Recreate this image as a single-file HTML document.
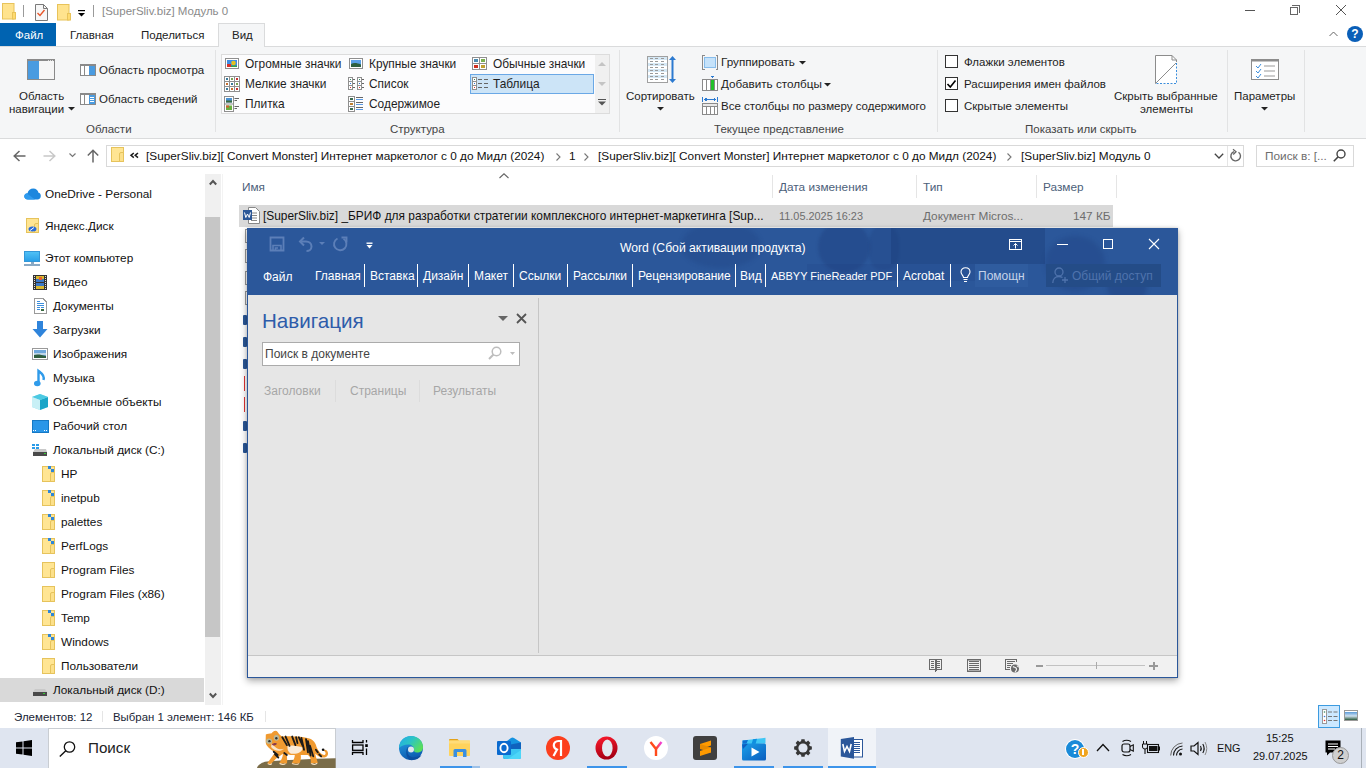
<!DOCTYPE html>
<html><head><meta charset="utf-8">
<style>
*{margin:0;padding:0;box-sizing:border-box}
html,body{width:1366px;height:768px;overflow:hidden;background:#fff;font-family:"Liberation Sans",sans-serif;font-size:12px;color:#000;position:relative}
.a{position:absolute;white-space:nowrap}
.t{font-size:11.5px;line-height:14px;color:#1e1e1e}
.w{font-size:12px;line-height:14px;color:#fff}
.u{font-size:11.8px;line-height:14px;color:#111}
.fold{position:absolute;width:13px;height:16px;background:#FFE593;border:1px solid #E6C35C}
.fold:after{content:"";position:absolute;right:-1px;bottom:-1px;width:3px;height:8px;border:1px solid #E6C35C;border-top-left-radius:2px;background:#FCE08A}
svg{position:absolute;overflow:visible}
</style></head><body>

<!-- ============ TITLE BAR ============ -->
<div id="title">
 <svg style="left:2px;top:3px" width="14" height="17"><rect x="0.5" y="0.5" width="11.5" height="15.5" fill="#FFE38E" stroke="#E8C35A"/><rect x="10.5" y="9.5" width="3" height="6.5" fill="#FFDB70" stroke="#E8C35A"/></svg>
 <div class="a" style="left:23px;top:5px;width:1px;height:12px;background:#9a9a9a"></div>
 <svg style="left:35px;top:4px" width="13" height="17"><path d="M0.5 0.5H8.5L12.5 4.5V16.5H0.5Z" fill="#f7f7f7" stroke="#7a7a7a"/><path d="M8.5 0.5V4.5H12.5" fill="none" stroke="#7a7a7a"/></svg>
 <svg style="left:37px;top:9px" width="8" height="8"><path d="M0.5 4 L3 6.5 L7.5 1" stroke="#E8562A" stroke-width="1.4" fill="none"/></svg>
 <svg style="left:57px;top:4px" width="14" height="17"><rect x="0.5" y="0.5" width="11.5" height="15.5" fill="#FFE38E" stroke="#E8C35A"/><rect x="10.5" y="9.5" width="3" height="6.5" fill="#FFDB70" stroke="#E8C35A"/></svg>
 <svg style="left:78px;top:10px" width="8" height="7"><rect x="0" y="0" width="7" height="1.2" fill="#000"/><path d="M0 3 L7 3 L3.5 6.5Z" fill="#000"/></svg>
 <div class="a" style="left:93px;top:5px;width:1px;height:12px;background:#9a9a9a"></div>
 <div class="a t" style="left:102px;top:4px;color:#8a8a8a">[SuperSliv.biz] Модуль 0</div>
 <div class="a" style="left:1245px;top:10px;width:10px;height:1px;background:#555"></div>
 <div class="a" style="left:1290px;top:7px;width:8px;height:8px;border:1px solid #666"></div>
 <div class="a" style="left:1292px;top:5px;width:8px;height:8px;border-top:1px solid #666;border-right:1px solid #666"></div>
 <svg style="left:1336px;top:5px" width="10" height="10"><path d="M0 0L10 10M10 0L0 10" stroke="#555" stroke-width="1"/></svg>
</div>

<!-- ============ TABS ============ -->
<div class="a" style="left:0;top:23px;width:56px;height:23px;background:#0063B1"></div>
<div class="a t" style="left:15px;top:28px;color:#fff">Файл</div>
<div class="a t" style="left:70px;top:28px;color:#222">Главная</div>
<div class="a t" style="left:141px;top:28px;color:#222">Поделиться</div>
<div class="a" style="left:218px;top:23px;width:47px;height:24px;background:#F5F6F7;border:1px solid #DADBDC;border-bottom:none;z-index:2"></div>
<div class="a t" style="left:232px;top:28px;color:#222;z-index:3">Вид</div>
<svg style="left:1329px;top:31px" width="9" height="6"><path d="M0.5 5 L4.5 1 L8.5 5" stroke="#666" stroke-width="1" fill="none"/></svg>
<div class="a" style="left:1347px;top:26px;width:16px;height:16px;border-radius:50%;background:#0A5FB8;color:#fff;font-weight:bold;font-size:12px;line-height:16px;text-align:center">?</div>

<!-- ============ RIBBON ============ -->
<div class="a" style="left:0;top:46px;width:1366px;height:93px;background:#F5F6F7;border-top:1px solid #DADBDC;border-bottom:1px solid #DADBDC"></div>
<div id="ribbon">
 <!-- Области -->
 <svg style="left:27px;top:59px" width="28" height="21" shape-rendering="crispEdges"><rect x="0.5" y="0.5" width="27" height="20" fill="#f6f6f6" stroke="#8a8a8a"/><rect x="1" y="1" width="26" height="1" fill="#8a8a8a"/><rect x="1" y="2" width="11" height="18" fill="#4A9BE0"/><rect x="21" y="1" width="1" height="1" fill="#ddd"/><rect x="23" y="1" width="1" height="1" fill="#ddd"/><rect x="25" y="1" width="1" height="1" fill="#ddd"/></svg>
 <div class="a t" style="left:19px;top:89px;">Область</div>
 <div class="a t" style="left:9px;top:102px;">навигации</div>
 <svg style="left:68px;top:107px" width="7" height="4"><path d="M0 0H7L3.5 3.5Z" fill="#222"/></svg>
 <svg style="left:80px;top:64px" width="16" height="12" shape-rendering="crispEdges"><rect x="0.5" y="0.5" width="15" height="11" fill="#fff" stroke="#8a8a8a"/><rect x="1" y="1" width="14" height="1" fill="#8a8a8a"/><rect x="4" y="2" width="1" height="9" fill="#8a8a8a"/><rect x="9" y="2" width="6" height="9" fill="#4A9BE0"/></svg>
 <div class="a t" style="left:99px;top:63px;">Область просмотра</div>
 <svg style="left:80px;top:93px" width="16" height="12" shape-rendering="crispEdges"><rect x="0.5" y="0.5" width="15" height="11" fill="#fff" stroke="#8a8a8a"/><rect x="1" y="1" width="14" height="1" fill="#8a8a8a"/><rect x="4" y="2" width="1" height="9" fill="#8a8a8a"/><rect x="9" y="2" width="6" height="9" fill="#4A9BE0"/><path d="M10 4.5H14M10 6.5H14M10 8.5H14" stroke="#fff"/></svg>
 <div class="a t" style="left:99px;top:92px;">Область сведений</div>
 <div class="a t" style="left:86px;top:122px;color:#444">Области</div>
 <div class="a" style="left:215px;top:50px;width:1px;height:82px;background:#E2E3E4"></div>
 <!-- Структура gallery -->
 <div class="a" style="left:221px;top:54px;width:389px;height:60px;background:#FCFCFD;border:1px solid #DCDCDC"></div>
 <div class="a" style="left:595px;top:55px;width:14px;height:58px;background:#F0F0F0"></div>
 <svg style="left:598px;top:62px" width="8" height="4"><path d="M0 4H8L4 0Z" fill="#C4C4C4"/></svg>
 <svg style="left:598px;top:82px" width="8" height="4"><path d="M0 0H8L4 4Z" fill="#C4C4C4"/></svg>
 <svg style="left:598px;top:99px" width="8" height="7"><rect x="0" y="0" width="8" height="1" fill="#555"/><path d="M0 2.5H8L4 6.5Z" fill="#555"/></svg>
 <div class="a" style="left:470px;top:74px;width:124px;height:20px;background:#CCE4F7;border:1px solid #6AA8E6"></div>
 <!-- gallery icons -->
 <svg style="left:225px;top:58px" width="14" height="11"><rect x="0.5" y="0.5" width="13" height="10" fill="#fff" stroke="#8f8f8f"/><rect x="2" y="2" width="10" height="7" fill="#3D8EE6"/><circle cx="8.5" cy="5" r="2.3" fill="#E6C21E"/><rect x="2" y="6" width="4" height="3" fill="#D8302A"/><rect x="6" y="7.5" width="6" height="1.5" fill="#3BA040"/></svg>
 <svg style="left:224px;top:76px" width="16" height="16"><rect x="0.5" y="0.5" width="15" height="15" fill="#fff" stroke="#8f8f8f"/><path d="M5.5 0.5V15.5M10.5 0.5V15.5M0.5 5.5H15.5M0.5 10.5H15.5" stroke="#8f8f8f"/><rect x="2" y="2" width="2" height="2" fill="#3a7a9a"/><rect x="7" y="2" width="2" height="2" fill="#7aa050"/><rect x="12" y="2" width="2" height="2" fill="#c83030"/><rect x="2" y="7" width="2" height="2" fill="#c87030"/><rect x="7" y="7" width="2" height="2" fill="#3a7a9a"/><rect x="12" y="7" width="2" height="2" fill="#7aa050"/><rect x="2" y="12" width="2" height="2" fill="#3a7a9a"/><rect x="7" y="12" width="2" height="2" fill="#c87030"/><rect x="12" y="12" width="2" height="2" fill="#c83030"/></svg>
 <svg style="left:224px;top:96px" width="16" height="16"><rect x="0.5" y="0.5" width="9" height="15" fill="#fff" stroke="#8f8f8f"/><path d="M0.5 8H9.5" stroke="#8f8f8f"/><rect x="2" y="2" width="6" height="4.5" fill="#4a90d0"/><rect x="2" y="4.5" width="6" height="2" fill="#3a6a40"/><rect x="2" y="9.5" width="6" height="4.5" fill="#6ab040"/><rect x="2" y="9.5" width="3" height="2" fill="#d06030"/><path d="M10.5 2.5H15M10.5 4.5H13M10.5 10.5H15M10.5 12.5H13" stroke="#666"/></svg>
 <svg style="left:349px;top:58px" width="14" height="11"><rect x="0.5" y="0.5" width="13" height="10" fill="#fff" stroke="#8f8f8f"/><rect x="2" y="2" width="10" height="7" fill="#5AA0E8"/><path d="M2 9V6C5 4.5 8 5 12 6.5V9Z" fill="#2E6040"/></svg>
 <svg style="left:348px;top:77px" width="17" height="13"><rect x="0.5" y="0.5" width="4" height="12" fill="#fff" stroke="#8f8f8f"/><path d="M0.5 4.5H4.5M0.5 8.5H4.5" stroke="#8f8f8f"/><rect x="9.5" y="0.5" width="4" height="12" fill="#fff" stroke="#8f8f8f"/><path d="M9.5 4.5H13.5M9.5 8.5H13.5" stroke="#8f8f8f"/><path d="M5 2.5H7M5 6.5H7M5 10.5H7M14 2.5H16M14 6.5H16M14 10.5H16" stroke="#666"/><rect x="2" y="2" width="1" height="1" fill="#386"/><rect x="2" y="6" width="1" height="1" fill="#37d"/><rect x="2" y="10" width="1" height="1" fill="#d33"/><rect x="11" y="2" width="1" height="1" fill="#386"/><rect x="11" y="6" width="1" height="1" fill="#37d"/><rect x="11" y="10" width="1" height="1" fill="#d33"/></svg>
 <svg style="left:348px;top:96px" width="16" height="16"><rect x="0.5" y="0.5" width="6" height="15" fill="#fff" stroke="#8f8f8f"/><path d="M0.5 5.5H6.5M0.5 10.5H6.5" stroke="#8f8f8f"/><rect x="2" y="2" width="3" height="2" fill="#3a6a50"/><rect x="2" y="7" width="3" height="2" fill="#c08030"/><rect x="2" y="12" width="3" height="2" fill="#3a6a50"/><path d="M8 1.5H15M8 6.5H15M8 11.5H15" stroke="#666"/><path d="M8 3.5H15M8 8.5H15M8 13.5H15" stroke="#5A9BE8"/></svg>
 <svg style="left:472px;top:57px" width="15" height="13"><rect x="0.5" y="0.5" width="14" height="12" fill="#fff" stroke="#8f8f8f"/><path d="M7.5 0.5V12.5M0.5 6.5H14.5" stroke="#8f8f8f"/><rect x="2" y="2" width="4" height="3" fill="#4a8ab0"/><rect x="9" y="2" width="4" height="3" fill="#7ab050"/><rect x="2" y="8" width="4" height="3" fill="#d03020"/><rect x="9" y="8" width="4" height="3" fill="#c0a030"/></svg>
 <svg style="left:472px;top:77px" width="17" height="13"><rect x="0.5" y="0.5" width="4" height="12" fill="#fff" stroke="#8f8f8f"/><path d="M0.5 4.5H4.5M0.5 8.5H4.5" stroke="#8f8f8f"/><rect x="2" y="2" width="1" height="1" fill="#386"/><rect x="2" y="6" width="1" height="1" fill="#37d"/><rect x="2" y="10" width="1" height="1" fill="#d33"/><path d="M6 2.5H10M12 2.5H16M6 6.5H10M12 6.5H16M6 10.5H10M12 10.5H16" stroke="#666"/></svg>
 <div class="a t" style="left:245px;top:57px;font-size:11.9px">Огромные значки</div>
 <div class="a t" style="left:245px;top:77px;font-size:11.9px">Мелкие значки</div>
 <div class="a t" style="left:245px;top:97px;font-size:11.9px">Плитка</div>
 <div class="a t" style="left:369px;top:57px;font-size:11.9px">Крупные значки</div>
 <div class="a t" style="left:369px;top:77px;font-size:11.9px">Список</div>
 <div class="a t" style="left:369px;top:97px;font-size:11.9px">Содержимое</div>
 <div class="a t" style="left:493px;top:57px;font-size:11.9px">Обычные значки</div>
 <div class="a t" style="left:493px;top:77px;font-size:11.9px">Таблица</div>
 <div class="a t" style="left:390px;top:122px;color:#444">Структура</div>
 <div class="a" style="left:619px;top:50px;width:1px;height:82px;background:#E2E3E4"></div>
 <!-- Текущее представление -->
 <svg style="left:647px;top:56px" width="21" height="27" shape-rendering="crispEdges"><rect x="0.5" y="0.5" width="20" height="26" fill="#fff" stroke="#a0a0a0"/><rect x="1" y="1" width="19" height="3" fill="#D5E8F5"/><path d="M3 2.5H6M8 2.5H11M14 2.5H17" stroke="#9a9a9a"/><path d="M3 5.5H6M8 5.5H11M14 5.5H17" stroke="#9a9a9a"/><rect x="1" y="7" width="19" height="3" fill="#D5E8F5"/><path d="M3 8.5H6M8 8.5H11M14 8.5H17" stroke="#9a9a9a"/><path d="M3 11.5H6M8 11.5H11M14 11.5H17" stroke="#9a9a9a"/><rect x="1" y="13" width="19" height="3" fill="#D5E8F5"/><path d="M3 14.5H6M8 14.5H11M14 14.5H17" stroke="#9a9a9a"/><path d="M3 17.5H6M8 17.5H11M14 17.5H17" stroke="#9a9a9a"/><rect x="1" y="19" width="19" height="3" fill="#D5E8F5"/><path d="M3 20.5H6M8 20.5H11M14 20.5H17" stroke="#9a9a9a"/><path d="M3 23.5H6M8 23.5H11M14 23.5H17" stroke="#9a9a9a"/></svg>
 <svg style="left:669px;top:56px" width="7" height="27"><path d="M3.5 3V24" stroke="#2C7AD0" stroke-width="2"/><path d="M0 4L3.5 0L7 4ZM0 23L3.5 27L7 23Z" fill="#2C7AD0"/></svg>
 <div class="a t" style="left:626px;top:89px;">Сортировать</div>
 <svg style="left:657px;top:107px" width="7" height="4"><path d="M0 0H7L3.5 3.5Z" fill="#222"/></svg>
 <svg style="left:702px;top:55px" width="16" height="15" shape-rendering="crispEdges"><path d="M2.5 0.5H0.5V14.5H2.5M13.5 0.5H15.5V14.5H13.5" fill="none" stroke="#8a8a8a"/><rect x="2.5" y="2.5" width="11" height="10" fill="#C5E2FA" stroke="#88BDEB"/></svg>
 <div class="a t" style="left:721px;top:55px;font-size:11.7px">Группировать</div>
 <svg style="left:799px;top:61px" width="7" height="4"><path d="M0 0H7L3.5 3.5Z" fill="#222"/></svg>
 <svg style="left:702px;top:76px" width="17" height="16" shape-rendering="crispEdges"><path d="M8 0H13L10.5 2Z" fill="#2C7AD0"/><rect x="0.5" y="3.5" width="15" height="11" fill="#fff" stroke="#8a8a8a"/><path d="M4.5 3.5V14.5M8.5 3.5V14.5M12.5 3.5V14.5" stroke="#8a8a8a"/><rect x="9" y="4" width="3" height="10" fill="#22C02A"/></svg>
 <div class="a t" style="left:721px;top:77px;font-size:11.7px">Добавить столбцы</div>
 <svg style="left:824px;top:83px" width="7" height="4"><path d="M0 0H7L3.5 3.5Z" fill="#222"/></svg>
 <svg style="left:702px;top:97px" width="17" height="18" shape-rendering="crispEdges"><path d="M0.5 0V5M15.5 0V5M2 2.5H14" stroke="#2C7AD0"/><path d="M2 2.5L4.5 0.5V4.5ZM14 2.5L11.5 0.5V4.5Z" fill="#2C7AD0"/><rect x="0.5" y="6.5" width="15" height="11" fill="#fff" stroke="#8a8a8a"/><path d="M0.5 9.5H15.5M4.5 9.5V17.5M8.5 9.5V17.5M12.5 9.5V17.5" stroke="#8a8a8a"/><rect x="1" y="7" width="14" height="2" fill="#e8e8e8"/></svg>
 <div class="a t" style="left:721px;top:99px;">Все столбцы по размеру содержимого</div>
 <div class="a t" style="left:714px;top:122px;color:#444">Текущее представление</div>
 <div class="a" style="left:937px;top:50px;width:1px;height:82px;background:#E2E3E4"></div>
 <!-- Показать или скрыть -->
 <div class="a" style="left:945px;top:55px;width:13px;height:13px;border:1px solid #333;background:#fff"></div>
 <div class="a t" style="left:964px;top:55px;">Флажки элементов</div>
 <div class="a" style="left:945px;top:77px;width:13px;height:13px;border:1px solid #333;background:#fff"></div>
 <svg style="left:947px;top:80px" width="9" height="8"><path d="M0.5 4L3.3 7L8.5 0.5" stroke="#000" stroke-width="1.6" fill="none"/></svg>
 <div class="a t" style="left:964px;top:77px;">Расширения имен файлов</div>
 <div class="a" style="left:945px;top:99px;width:13px;height:13px;border:1px solid #333;background:#fff"></div>
 <div class="a t" style="left:964px;top:99px;">Скрытые элементы</div>
 <svg style="left:1155px;top:55px" width="22" height="29"><path d="M0.5 28.5V0.5H17L21.5 5V28.5" fill="#fff" stroke="none"/><path d="M0.5 28.5V0.5H17L21.5 5V7" fill="none" stroke="#8c8c8c"/><path d="M17 0.5V5H21.5" fill="none" stroke="#8c8c8c"/><path d="M0.5 28.5L21 8" stroke="#8c8c8c"/><path d="M21.5 8V28.5H1" stroke="#3C8EDC" stroke-dasharray="2 1.5" fill="none"/></svg>
 <div class="a t" style="left:1114px;top:89px;">Скрыть выбранные</div>
 <div class="a t" style="left:1140px;top:102px;">элементы</div>
 <div class="a t" style="left:1025px;top:122px;color:#444">Показать или скрыть</div>
 <div class="a" style="left:1227px;top:50px;width:1px;height:82px;background:#E2E3E4"></div>
 <!-- Параметры -->
 <svg style="left:1251px;top:59px" width="28" height="21"><rect x="0.5" y="0.5" width="27" height="20" fill="#fff" stroke="#8c8c8c"/><rect x="0.5" y="0.5" width="27" height="2" fill="#8c8c8c"/><path d="M5 7L7 9L10 5M5 12L7 14L10 10M5 17L7 19L10 15" stroke="#3C8EDC" stroke-width="1" fill="none"/><path d="M13 7H24M13 12H24M13 17H24" stroke="#999"/></svg>
 <div class="a t" style="left:1234px;top:89px;">Параметры</div>
 <svg style="left:1261px;top:107px" width="7" height="4"><path d="M0 0H7L3.5 3.5Z" fill="#222"/></svg>
 <div class="a" style="left:1304px;top:50px;width:1px;height:82px;background:#E2E3E4"></div>
</div>

<!-- ============ ADDRESS BAR ============ -->
<div id="addr">
 <svg style="left:13px;top:150px" width="13" height="12"><path d="M12.5 6H1.5M6.5 1L1.2 6L6.5 11" stroke="#666" stroke-width="1.5" fill="none"/></svg>
 <svg style="left:43px;top:150px" width="13" height="12"><path d="M0.5 6H11.5M6.5 1L11.8 6L6.5 11" stroke="#C8C8C8" stroke-width="1.5" fill="none"/></svg>
 <svg style="left:69px;top:153px" width="7" height="5"><path d="M0.5 0.5L3.5 3.5L6.5 0.5" stroke="#777" stroke-width="1.2" fill="none"/></svg>
 <svg style="left:87px;top:149px" width="12" height="14"><path d="M6 13.5V1.5M0.8 6.5L6 1.2L11.2 6.5" stroke="#666" stroke-width="1.5" fill="none"/></svg>
 <div class="a" style="left:106px;top:145px;width:1138px;height:22px;border:1px solid #D9D9D9;background:#fff"></div>
 <div class="fold" style="left:111px;top:147px;width:13px;height:15px"></div>
 <svg style="left:130px;top:152px" width="9" height="7"><path d="M3.8 1L1 3.3L3.8 5.6M8 1L5.2 3.3L8 5.6" stroke="#1a1a1a" stroke-width="1.5" fill="none"/></svg>
 <div class="a u" style="left:146px;top:149px;">[SuperSliv.biz][ Convert Monster] Интернет маркетолог с 0 до Мидл (2024)</div>
 <svg style="left:556px;top:153px" width="5" height="8"><path d="M0.5 0.5L4 4L0.5 7.5" stroke="#777" stroke-width="1.1" fill="none"/></svg>
 <div class="a u" style="left:569px;top:149px;">1</div>
 <svg style="left:584px;top:153px" width="5" height="8"><path d="M0.5 0.5L4 4L0.5 7.5" stroke="#777" stroke-width="1.1" fill="none"/></svg>
 <div class="a u" style="left:598px;top:149px;">[SuperSliv.biz][ Convert Monster] Интернет маркетолог с 0 до Мидл (2024)</div>
 <svg style="left:1007px;top:153px" width="5" height="8"><path d="M0.5 0.5L4 4L0.5 7.5" stroke="#777" stroke-width="1.1" fill="none"/></svg>
 <div class="a u" style="left:1021px;top:149px;">[SuperSliv.biz] Модуль 0</div>
 <svg style="left:1214px;top:153px" width="10" height="6"><path d="M0.8 0.8L5 5L9.2 0.8" stroke="#444" stroke-width="1.3" fill="none"/></svg>
 <div class="a" style="left:1227px;top:146px;width:1px;height:20px;background:#E5E5E5"></div>
 <svg style="left:1230px;top:149px" width="12" height="14"><path d="M8.5 3.2A4.8 4.8 0 1 1 4 2.6" stroke="#666" stroke-width="1.4" fill="none"/><path d="M3 0.3L6 2.7L3.2 5.5" stroke="#666" stroke-width="1.3" fill="none"/></svg>
 <div class="a" style="left:1256px;top:145px;width:98px;height:22px;border:1px solid #D9D9D9;background:#fff"></div>
 <div class="a u" style="left:1265px;top:149px;color:#6d6d6d">Поиск в: [...</div>
 <svg style="left:1333px;top:149px" width="13" height="13"><circle cx="8" cy="5" r="4" stroke="#444" stroke-width="1.4" fill="none"/><path d="M5.2 7.8L0.8 12.2" stroke="#444" stroke-width="1.6"/></svg>
</div>

<!-- ============ NAV PANE ============ -->
<div id="nav">
<div class="a" style="left:0;top:678px;width:204px;height:24px;background:#D9D9D9"></div>
<div class="a" style="left:205px;top:174px;width:16px;height:531px;background:#F0F0F0"></div>
<div class="a" style="left:205px;top:217px;width:15px;height:420px;background:#C6C6C6"></div><div class="a" style="left:222px;top:174px;width:1px;height:531px;background:#F3F3F3"></div>
<svg style="left:209px;top:179px" width="8" height="7"><path d="M0.8 5.5L4 2L7.2 5.5" stroke="#555" stroke-width="2" fill="none"/></svg>
<svg style="left:209px;top:692px" width="8" height="7"><path d="M0.8 1.5L4 5L7.2 1.5" stroke="#555" stroke-width="2" fill="none"/></svg>
<div class="a u" style="left:45px;top:187px;">OneDrive - Personal</div>
<svg style="left:24px;top:188px" width="17" height="12"><path d="M4 11.5C1.5 11.5 0.3 10 0.3 8.3C0.3 6.5 1.8 5.2 3.5 5.3C4.2 2.5 6.5 0.5 9.3 0.5C12 0.5 14 2.4 14.5 4.8C16 5 16.8 6.4 16.8 8C16.8 10 15.3 11.5 13.5 11.5Z" fill="#1C87DE"/><path d="M4 11.5C1.5 11.5 0.3 10 0.3 8.3C0.3 6.8 1.5 5.5 3 5.4L11 11.5Z" fill="#2E9BEF"/></svg>
<div class="a u" style="left:45px;top:219px;">Яндекс.Диск</div>
<div class="fold" style="left:26px;top:218px;width:13px;height:15px"></div><svg style="left:28px;top:226px" width="9" height="6"><ellipse cx="4.5" cy="3" rx="4" ry="2.5" fill="#2A6BD8"/><path d="M2 4.5L6 1.5" stroke="#fff" stroke-width="1"/></svg>
<div class="a u" style="left:45px;top:251px;">Этот компьютер</div>
<div class="a" style="left:24px;top:251px;width:16px;height:11px;background:linear-gradient(180deg,#4FC0F5,#2AA0E8);border:1px solid #3397D8"></div><div class="a" style="left:24px;top:264px;width:16px;height:2px;background:#8AA9C4"></div><div class="a" style="left:31px;top:262px;width:3px;height:2px;background:#8AA9C4"></div>
<div class="a u" style="left:53px;top:275px;">Видео</div>
<svg style="left:33px;top:275px" width="14" height="15" shape-rendering="crispEdges"><rect x="0" y="0" width="14" height="15" fill="#333"/><path d="M1.5 1V14M12.5 1V14" stroke="#ddd" stroke-dasharray="1 1"/><rect x="3" y="1" width="8" height="6" fill="#3A78C8"/><rect x="3" y="1" width="8" height="3" fill="#D8B830"/><rect x="6" y="2" width="3" height="3" fill="#E86030"/><rect x="3" y="8" width="8" height="6" fill="#3A78C8"/><rect x="3" y="11" width="8" height="3" fill="#D8B830"/></svg>
<div class="a u" style="left:53px;top:299px;">Документы</div>
<svg style="left:34px;top:298px" width="13" height="16" shape-rendering="crispEdges"><path d="M0.5 0.5H9L12.5 4V15.5H0.5Z" fill="#fff" stroke="#9a9a9a"/><path d="M3 3.5H6M3 5.5H10M3 7.5H10M3 9.5H6M7 9.5H10M3 11.5H6M7 11.5H10" stroke="#3C8EDC"/><rect x="7" y="11" width="3" height="2" fill="#3a6a40"/></svg>
<div class="a u" style="left:53px;top:323px;">Загрузки</div>
<svg style="left:32px;top:321px" width="16" height="17"><path d="M5 0H11V8H15.5L8 16.5L0.5 8H5Z" fill="#2F84DB"/></svg>
<div class="a u" style="left:53px;top:347px;">Изображения</div>
<svg style="left:32px;top:348px" width="16" height="12" shape-rendering="crispEdges"><rect x="0.5" y="0.5" width="15" height="11" fill="#fff" stroke="#9a9a9a"/><rect x="2" y="2" width="12" height="8" fill="#6FA8DC"/><rect x="2" y="5" width="12" height="2" fill="#BFD6E8"/><path d="M2 10V7C5 6 9 6.5 14 8V10Z" fill="#2F5E3E" shape-rendering="auto"/></svg>
<div class="a u" style="left:53px;top:371px;">Музыка</div>
<svg style="left:34px;top:370px" width="12" height="17"><path d="M4.5 13V1C7 3 11 5 9.5 10" stroke="#2F9BEA" stroke-width="2.4" fill="none"/><ellipse cx="3.3" cy="13.5" rx="3.3" ry="2.8" fill="#2F9BEA"/></svg>
<div class="a u" style="left:53px;top:395px;">Объемные объекты</div>
<svg style="left:32px;top:394px" width="16" height="16"><path d="M8 0L16 3V13L8 16L0 13V3Z" fill="#8FE0EE"/><path d="M8 6L16 3V13L8 16Z" fill="#1AA5C8"/><path d="M0 3L8 0L16 3L8 6Z" fill="#4CC9E2"/><path d="M0 3L8 6V16L0 13Z" fill="#C8F0F6"/></svg>
<div class="a u" style="left:53px;top:419px;">Рабочий стол</div>
<svg style="left:32px;top:420px" width="16" height="13" shape-rendering="crispEdges"><rect x="0" y="0" width="16" height="12" fill="#2A96E8"/><rect x="0" y="0" width="16" height="12" fill="none" stroke="#1578C4"/><path d="M1 10.5H2M3 10.5H4M12 10.5H13M14 10.5H15" stroke="#fff"/></svg>
<div class="a u" style="left:53px;top:443px;">Локальный диск (C:)</div>
<svg style="left:32px;top:444px" width="16" height="13" shape-rendering="crispEdges"><rect x="0" y="0" width="3" height="2" fill="#2A9BE8"/><rect x="3.5" y="0" width="3" height="2" fill="#2A9BE8"/><rect x="0" y="2.5" width="3" height="2" fill="#2A9BE8"/><rect x="3.5" y="2.5" width="3" height="2" fill="#2A9BE8"/><path d="M1 8L3 5H14L15 8Z" fill="#C9C9C9" shape-rendering="auto"/><rect x="1" y="8" width="14" height="4" fill="#4A4A4A"/><rect x="12" y="9" width="2" height="1" fill="#3c3"/></svg>
<div class="a u" style="left:61px;top:467px;">HP</div>
<div class="fold" style="left:42px;top:466px"></div>
<svg style="left:48px;top:466px" width="7" height="7"><rect x="0" y="0" width="3" height="3" fill="#2E86D9"/><rect x="3" y="3" width="3" height="3" fill="#2E86D9"/></svg>
<div class="a u" style="left:61px;top:491px;">inetpub</div>
<div class="fold" style="left:42px;top:490px"></div>
<svg style="left:48px;top:490px" width="7" height="7"><rect x="0" y="0" width="3" height="3" fill="#2E86D9"/><rect x="3" y="3" width="3" height="3" fill="#2E86D9"/></svg>
<div class="a u" style="left:61px;top:515px;">palettes</div>
<div class="fold" style="left:42px;top:514px"></div>
<svg style="left:48px;top:514px" width="7" height="7"><rect x="0" y="0" width="3" height="3" fill="#2E86D9"/><rect x="3" y="3" width="3" height="3" fill="#2E86D9"/></svg>
<div class="a u" style="left:61px;top:539px;">PerfLogs</div>
<div class="fold" style="left:42px;top:538px"></div>
<svg style="left:48px;top:538px" width="7" height="7"><rect x="0" y="0" width="3" height="3" fill="#2E86D9"/><rect x="3" y="3" width="3" height="3" fill="#2E86D9"/></svg>
<div class="a u" style="left:61px;top:563px;">Program Files</div>
<div class="fold" style="left:42px;top:562px"></div>
<div class="a u" style="left:61px;top:587px;">Program Files (x86)</div>
<div class="fold" style="left:42px;top:586px"></div>
<div class="a u" style="left:61px;top:611px;">Temp</div>
<div class="fold" style="left:42px;top:610px"></div>
<svg style="left:48px;top:610px" width="7" height="7"><rect x="0" y="0" width="3" height="3" fill="#2E86D9"/><rect x="3" y="3" width="3" height="3" fill="#2E86D9"/></svg>
<div class="a u" style="left:61px;top:635px;">Windows</div>
<div class="fold" style="left:42px;top:634px"></div>
<svg style="left:48px;top:634px" width="7" height="7"><rect x="0" y="0" width="3" height="3" fill="#2E86D9"/><rect x="3" y="3" width="3" height="3" fill="#2E86D9"/></svg>
<div class="a u" style="left:61px;top:659px;">Пользователи</div>
<div class="fold" style="left:42px;top:658px"></div>
<div class="a u" style="left:53px;top:683px;">Локальный диск (D:)</div>
<svg style="left:33px;top:688px" width="14" height="9" shape-rendering="crispEdges"><path d="M0 4L2 1H12L14 4Z" fill="#C9C9C9" shape-rendering="auto"/><rect x="0" y="4" width="14" height="4" fill="#4A4A4A"/><rect x="10" y="5" width="2" height="1" fill="#3c3"/></svg>
</div>

<!-- ============ FILE LIST ============ -->
<div id="files">
 <svg style="left:499px;top:173px" width="10" height="6"><path d="M0.5 5L5 0.8L9.5 5" stroke="#666" stroke-width="1.1" fill="none"/></svg>
 <div class="a u" style="left:242px;top:180px;color:#4C607A">Имя</div>
 <div class="a" style="left:772px;top:175px;width:1px;height:23px;background:#E5E5E5"></div>
 <div class="a u" style="left:779px;top:180px;color:#4C607A">Дата изменения</div>
 <div class="a" style="left:916px;top:175px;width:1px;height:23px;background:#E5E5E5"></div>
 <div class="a u" style="left:923px;top:180px;color:#4C607A">Тип</div>
 <div class="a" style="left:1036px;top:175px;width:1px;height:23px;background:#E5E5E5"></div>
 <div class="a u" style="left:1043px;top:180px;color:#4C607A">Размер</div>
 <div class="a" style="left:1116px;top:175px;width:1px;height:23px;background:#E5E5E5"></div>
 <div class="a" style="left:239px;top:205px;width:874px;height:22px;background:#D9D9D9"></div>
 <svg style="left:243px;top:207px" width="17" height="17"><path d="M5.5 0.5H12.5L16.5 4.5V16.5H5.5Z" fill="#fff" stroke="#888"/><path d="M8 6H14M8 8.5H14M8 11H14M8 13.5H14" stroke="#888"/><rect x="0" y="3" width="9" height="10" fill="#2B5797"/><path d="M1.5 5.5L2.8 10.5L4.5 7L6.2 10.5L7.5 5.5" stroke="#fff" stroke-width="1" fill="none"/></svg>
 <div class="a u" style="left:263px;top:209px;font-size:11.9px">[SuperSliv.biz] _БРИФ для разработки стратегии комплексного интернет-маркетинга [Sup...</div>
 <div class="a u" style="left:779px;top:209px;color:#6d6d6d;font-size:10.9px">11.05.2025 16:23</div>
 <div class="a u" style="left:923px;top:209px;color:#6d6d6d">Документ Micros...</div>
 <div class="a u" style="left:1073px;top:209px;color:#6d6d6d">147 КБ</div>
 <!-- slivers behind word window -->
 <div class="a" style="left:245px;top:229px;width:3px;height:14px;border:1px solid #999;border-right:none;background:#fff"></div>
 <div class="a" style="left:245px;top:249px;width:3px;height:14px;border:1px solid #999;border-right:none;background:#fff"></div>
 <div class="a" style="left:245px;top:271px;width:3px;height:14px;border:1px solid #999;border-right:none;background:#fff"></div>
 <div class="a" style="left:245px;top:291px;width:3px;height:14px;border:1px solid #999;border-right:none;background:#fff"></div>
 <div class="a" style="left:243px;top:315px;width:4px;height:10px;background:#2B5797;border-radius:1px"></div>
 <div class="a" style="left:243px;top:337px;width:4px;height:10px;background:#2B5797;border-radius:1px"></div>
 <div class="a" style="left:243px;top:359px;width:4px;height:10px;background:#2B5797;border-radius:1px"></div>
 <div class="a" style="left:244px;top:376px;width:3px;height:15px;border-left:1px solid #D33;background:#fff"></div>
 <div class="a" style="left:244px;top:397px;width:3px;height:15px;border-left:1px solid #D33;background:#fff"></div>
 <div class="a" style="left:243px;top:421px;width:4px;height:10px;background:#2B5797;border-radius:1px"></div>
 <div class="a" style="left:243px;top:443px;width:4px;height:10px;background:#2B5797;border-radius:1px"></div>
</div>

<!-- ============ STATUS BAR ============ -->
<div id="status">
 <div class="a u" style="left:14px;top:710px;color:#1a2535;font-size:11.5px">Элементов: 12</div>
 <div class="a" style="left:102px;top:711px;width:1px;height:11px;background:#E5E5E5"></div>
 <div class="a u" style="left:113px;top:710px;color:#1a2535;font-size:11.4px">Выбран 1 элемент: 146 КБ</div>
 <div class="a" style="left:265px;top:711px;width:1px;height:11px;background:#E5E5E5"></div>
 <div class="a" style="left:1318px;top:705px;width:22px;height:23px;background:#CCE8FF;border:1px solid #3C9BE0"></div>
 <svg style="left:1322px;top:709px" width="16" height="15"><rect x="0.5" y="0.5" width="4" height="14" fill="#fff" stroke="#999"/><circle cx="2.5" cy="3" r="0.8" fill="#386"/><circle cx="2.5" cy="7.5" r="0.8" fill="#37d"/><circle cx="2.5" cy="11.5" r="0.8" fill="#d33"/><path d="M6 3H10M11.5 3H15.5M6 7.5H10M11.5 7.5H15.5M6 11.5H10M11.5 11.5H15.5" stroke="#777" stroke-width="1"/></svg>
 <div class="a" style="left:1344px;top:710px;width:14px;height:11px;border:1px solid #999;background:linear-gradient(180deg,#fff 0,#fff 1px,#5b9bd8 1px,#cfe1f0 5px,#2d5a3c 9px)"></div>
</div>

<!-- ============ WORD WINDOW ============ -->
<div id="word">
 <div class="a" style="left:247px;top:228px;width:931px;height:450px;background:#E6E6E6;border:1px solid #2B579A;box-shadow:0 3px 7px rgba(0,0,0,0.32),0 0 3px rgba(0,0,0,0.15)"></div>
 <div class="a" style="left:247px;top:228px;width:931px;height:67px;background:#2B579A;overflow:hidden">
  <div class="a" style="left:434px;top:-5px;width:80px;height:45px;border-radius:50%;background:rgba(22,52,112,0.18);filter:blur(2px)"></div>
  <div class="a" style="left:571px;top:-7px;width:52px;height:52px;border-radius:50%;background:rgba(22,52,112,0.26);filter:blur(1.5px)"></div>
  <div class="a" style="left:622px;top:-2px;width:30px;height:44px;border-radius:40%;background:rgba(22,52,112,0.18);filter:blur(1px)"></div>
  <div class="a" style="left:644px;top:0px;width:154px;height:36px;background:rgba(22,52,112,0.32)"></div>
  <div class="a" style="left:560px;top:36px;width:170px;height:17px;background:rgba(22,52,112,0.12)"></div>
  <div class="a" style="left:798px;top:8px;width:60px;height:55px;border-radius:50%;background:rgba(22,52,112,0.22);filter:blur(2px)"></div>
  <div class="a" style="left:860px;top:40px;width:40px;height:36px;border-radius:50%;background:rgba(22,52,112,0.3);filter:blur(2px)"></div>
 </div>
 <!-- QAT -->
 <svg style="left:269px;top:236px" width="16" height="16"><path d="M1.5 1.5H14.5V14.5H1.5Z" fill="none" stroke="#5C7FB8" stroke-width="1.8"/><path d="M4 14.5V9.5H12V14.5M6.5 14.5V12H9" fill="none" stroke="#5C7FB8" stroke-width="1.6"/></svg>
 <svg style="left:298px;top:236px" width="16" height="16"><path d="M2.5 5.5H8C11 5.5 13.5 7.5 13.5 10.5C13.5 13.5 11 15 8.5 15" stroke="#5C7FB8" stroke-width="2" fill="none"/><path d="M6 1.5L2 5.5L6 9.5" stroke="#5C7FB8" stroke-width="2" fill="none"/></svg>
 <svg style="left:319px;top:242px" width="6" height="4"><path d="M0 0H6L3 3Z" fill="#5C7FB8"/></svg>
 <svg style="left:333px;top:236px" width="16" height="16"><path d="M10.5 2.8A6.2 6.2 0 1 1 4.5 2.5" stroke="#5C7FB8" stroke-width="1.9" fill="none"/><path d="M8.5 1.5H13.5V6.5" stroke="#5C7FB8" stroke-width="1.9" fill="none"/></svg>
 <svg style="left:366px;top:242px" width="7" height="8"><rect x="0.5" y="0.5" width="6" height="1.4" fill="#fff"/><path d="M0.5 3H6.5L3.5 6.5Z" fill="#fff"/></svg>
 <div class="a" style="left:620px;top:241px;font-size:12.2px;color:#fff;line-height:14px">Word (Сбой активации продукта)</div>
 <!-- window controls -->
 <svg style="left:1009px;top:239px" width="13" height="11"><rect x="0.5" y="0.5" width="12" height="10" fill="none" stroke="#fff"/><path d="M0.5 2.5H12.5M6.5 9.5V4.5M4.5 6.5L6.5 4.5L8.5 6.5" stroke="#fff" fill="none"/></svg>
 <div class="a" style="left:1057px;top:244px;width:11px;height:1px;background:#fff"></div>
 <div class="a" style="left:1103px;top:239px;width:10px;height:10px;border:1px solid #fff"></div>
 <svg style="left:1149px;top:239px" width="10" height="10"><path d="M0 0L10 10M10 0L0 10" stroke="#fff" stroke-width="1.1"/></svg>
 <!-- ribbon tabs -->
 <div class="a w" style="left:263px;top:270px;">Файл</div>
 <div class="a w" style="left:315px;top:269px;">Главная</div>
 <div class="a" style="left:364px;top:264px;width:1px;height:23px;background:#fff"></div>
 <div class="a w" style="left:370px;top:269px;">Вставка</div>
 <div class="a" style="left:417px;top:264px;width:1px;height:23px;background:#fff"></div>
 <div class="a w" style="left:423px;top:269px;">Дизайн</div>
 <div class="a" style="left:468px;top:264px;width:1px;height:23px;background:#fff"></div>
 <div class="a w" style="left:474px;top:269px;">Макет</div>
 <div class="a" style="left:513px;top:264px;width:1px;height:23px;background:#fff"></div>
 <div class="a w" style="left:519px;top:269px;">Ссылки</div>
 <div class="a" style="left:567px;top:264px;width:1px;height:23px;background:#fff"></div>
 <div class="a w" style="left:573px;top:269px;">Рассылки</div>
 <div class="a" style="left:632px;top:264px;width:1px;height:23px;background:#fff"></div>
 <div class="a w" style="left:638px;top:269px;">Рецензирование</div>
 <div class="a" style="left:735px;top:264px;width:1px;height:23px;background:#fff"></div>
 <div class="a w" style="left:740px;top:269px;">Вид</div>
 <div class="a" style="left:765px;top:264px;width:1px;height:23px;background:#fff"></div>
 <div class="a w" style="left:771px;top:269px;font-size:11px;letter-spacing:-0.05px">ABBYY FineReader PDF</div>
 <div class="a" style="left:897px;top:264px;width:1px;height:23px;background:#fff"></div>
 <div class="a w" style="left:903px;top:269px;">Acrobat</div>
 <div class="a" style="left:950px;top:264px;width:1px;height:23px;background:#fff"></div>
 <svg style="left:960px;top:267px" width="11" height="16"><path d="M3.5 10.5C3.5 8.5 1 7.5 1 5C1 2.5 3 0.8 5.5 0.8C8 0.8 10 2.5 10 5C10 7.5 7.5 8.5 7.5 10.5Z" stroke="#fff" stroke-width="1.1" fill="none"/><path d="M3.5 12.5H7.5M4 14.5H7" stroke="#fff" stroke-width="1.1"/></svg>
 <div class="a" style="left:975px;top:264px;width:53px;height:23px;background:#2F5C9F"></div>
 <div class="a w" style="left:978px;top:269px;color:#C5D3EA">Помощн</div>
 <div class="a" style="left:1046px;top:264px;width:115px;height:23px;background:#244C87"></div>
 <svg style="left:1052px;top:267px" width="17" height="17"><circle cx="7" cy="5" r="4" stroke="#4F73AD" stroke-width="1.3" fill="none"/><path d="M0.8 16C0.8 12 3.5 9.5 7 9.5C8.5 9.5 9.5 10 10.5 10.5M13 10V16M10 13H16" stroke="#4F73AD" stroke-width="1.3" fill="none"/></svg>
 <div class="a w" style="left:1072px;top:269px;color:#4F73AD">Общий доступ</div>
 <!-- nav pane -->
 <div class="a" style="left:262px;top:309px;font-size:20.6px;line-height:24px;color:#2E5CAA">Навигация</div>
 <svg style="left:498px;top:316px" width="10" height="5"><path d="M0 0H10L5 5Z" fill="#666"/></svg>
 <svg style="left:516px;top:313px" width="11" height="11"><path d="M1 1L10 10M10 1L1 10" stroke="#555" stroke-width="1.8"/></svg>
 <div class="a" style="left:262px;top:342px;width:258px;height:24px;background:#fff;border:1px solid #ABABAB"></div>
 <div class="a" style="left:265px;top:347px;font-size:12px;line-height:14px;color:#444">Поиск в документе</div>
 <svg style="left:488px;top:346px" width="14" height="14"><circle cx="8.5" cy="5.5" r="4.3" stroke="#BDBDBD" stroke-width="1.5" fill="none"/><path d="M5.5 8.5L1 13" stroke="#BDBDBD" stroke-width="2"/></svg>
 <svg style="left:510px;top:352px" width="5" height="3"><path d="M0 0H5L2.5 3Z" fill="#BDBDBD"/></svg>
 <div class="a" style="left:264px;top:384px;font-size:12px;line-height:14px;color:#A6A6A6">Заголовки</div>
 <div class="a" style="left:335px;top:380px;width:1px;height:22px;background:#DCDCDC"></div>
 <div class="a" style="left:350px;top:384px;font-size:12px;line-height:14px;color:#A6A6A6">Страницы</div>
 <div class="a" style="left:419px;top:380px;width:1px;height:22px;background:#DCDCDC"></div>
 <div class="a" style="left:433px;top:384px;font-size:12px;line-height:14px;color:#A6A6A6">Результаты</div>
 <div class="a" style="left:538px;top:298px;width:1px;height:355px;background:#C6C6C6"></div>
 <!-- status bar -->
 <div class="a" style="left:248px;top:655px;width:929px;height:22px;background:#F1F1F1;border-top:1px solid #C6C6C6"></div>
 <svg style="left:929px;top:659px" width="13" height="14" shape-rendering="crispEdges"><path d="M0.5 0.5H12.5V10.5H0.5Z" fill="none" stroke="#6a6a6a"/><path d="M2 2.5H5M2 4.5H5M2 6.5H5M2 8.5H5M8 2.5H11M8 4.5H11M8 6.5H11M8 8.5H11" stroke="#6a6a6a"/><path d="M6 0V13M7 0V12" stroke="#6a6a6a"/></svg>
 <svg style="left:967px;top:659px" width="14" height="13" shape-rendering="crispEdges"><path d="M0.5 0.5H13.5V12.5H0.5Z" fill="none" stroke="#6a6a6a"/><path d="M0.5 1.5H13.5V11.5H0.5Z" fill="none" stroke="#6a6a6a" stroke-opacity="0.5"/><path d="M2 2.5H12M2 4.5H12M2 6.5H12M2 8.5H12M2 10.5H12" stroke="#6a6a6a"/></svg>
 <svg style="left:1005px;top:659px" width="14" height="14"><path d="M0.5 11V0.5H11.5V3" fill="none" stroke="#6a6a6a" shape-rendering="crispEdges"/><path d="M0.5 10.5H5M2 2.5H10M2 4.5H8M2 6.5H6M2 8.5H5" stroke="#6a6a6a" shape-rendering="crispEdges"/><circle cx="10" cy="9.5" r="4" fill="#6a6a6a"/><path d="M8 7.5C9 8.5 10 8 11 9C12 10 11 12 10 13M12 6.5C12.5 7.5 13 8 14 8" stroke="#f1f1f1" stroke-width="1.1" fill="none"/></svg>
 <div class="a" style="left:1036px;top:665px;width:7px;height:2px;background:#999"></div>
 <div class="a" style="left:1046px;top:665px;width:99px;height:1px;background:#C2C2C2"></div>
 <div class="a" style="left:1096px;top:662px;width:1px;height:7px;background:#AAA"></div>
 <div class="a" style="left:1149px;top:665px;width:9px;height:2px;background:#999"></div>
 <div class="a" style="left:1153px;top:662px;width:2px;height:8px;background:#999"></div>
</div>

<!-- ============ TASKBAR ============ -->
<div id="taskbar">
 <div class="a" style="left:0;top:728px;width:1366px;height:40px;background:#DFE5F0"></div>
 <svg style="left:16px;top:740px" width="16" height="16"><path d="M0 2.3L6.5 1.4V7.5H0ZM7.5 1.2L16 0V7.5H7.5ZM0 8.5H6.5V14.6L0 13.7ZM7.5 8.5H16V16L7.5 14.8Z" fill="#000"/></svg>
 <div class="a" style="left:48px;top:728px;width:288px;height:40px;background:#fff;border:1px solid #C9CDD2;border-bottom:none"></div>
 <svg style="left:59px;top:741px" width="17" height="16"><circle cx="10.5" cy="6" r="5.2" stroke="#111" stroke-width="1.3" fill="none"/><path d="M6.8 9.7L0.8 15.5" stroke="#111" stroke-width="1.4"/></svg>
 <div class="a" style="left:88px;top:739px;font-size:15.2px;line-height:18px;color:#222">Поиск</div>
 <!-- tiger -->
 <svg style="left:250px;top:726px" width="90" height="42" viewBox="0 0 1366 637">
  <path d="M105 637C120 590 170 550 260 540C500 520 900 500 1300 490V637Z" fill="#7A6C48"/>
  <path d="M240 130C260 110 300 120 330 110C350 70 400 60 420 90C440 120 460 150 500 160C600 150 800 160 900 190C960 210 1000 260 1010 320C1040 380 1080 440 1130 440C1160 430 1150 380 1110 370C1150 340 1200 390 1180 440C1160 490 1080 490 1030 450C1000 430 990 420 990 420C1000 480 1020 520 1030 560L920 570C930 520 920 470 880 440C840 440 800 440 770 440C780 500 760 540 750 570H630C660 520 680 480 680 440C630 440 590 440 560 420C560 480 570 530 560 570H440C470 520 500 470 500 420C480 440 420 470 390 500C350 540 330 570 310 580L260 570C300 520 340 460 380 400C340 380 280 340 250 290C230 250 240 200 240 130Z" fill="#F09A30"/>
  <path d="M330 260C380 330 460 380 520 340C470 400 360 380 320 320Z" fill="#FBE6C8"/>
  <path d="M570 300C650 290 760 310 800 330C790 400 720 430 620 420C580 400 560 350 570 300Z" fill="#FAEBD8"/>
  <path d="M490 170L560 290M540 160L600 300M640 160L690 290M700 170L720 260M740 170L800 300M780 180L820 360M850 200L880 400M880 230L920 450M910 300L960 460M360 390L420 440M380 430L430 480M520 410L560 440M1000 360L1030 400M1050 430L1080 460" stroke="#1A1A1A" stroke-width="28" stroke-linecap="round"/>
  <ellipse cx="290" cy="230" rx="45" ry="40" fill="#B8B89A"/><ellipse cx="400" cy="180" rx="40" ry="45" fill="#B8B89A"/>
  <circle cx="295" cy="230" r="18" fill="#333"/><circle cx="400" cy="185" r="18" fill="#333"/>
  <path d="M330 280C360 250 400 250 410 270C390 300 350 300 330 280Z" fill="#8A3A4A"/>
  <circle cx="1110" cy="360" r="20" fill="#111"/>
  <path d="M270 570C300 590 320 590 330 570M450 570C480 585 520 585 540 570M640 570C670 585 720 585 740 570M930 570C960 585 1000 585 1020 565" stroke="#FBE6C8" stroke-width="16" fill="none"/>
 </svg>
 <!-- task view -->
 <svg style="left:351px;top:739px" width="19" height="17"><path d="M1.5 1V3.5H12V1M1.5 16V13.5H12V16M15.5 1V3.5M15.5 9.5V16" stroke="#000" stroke-width="1.3" fill="none"/><rect x="1.6" y="6" width="10.4" height="5.3" fill="none" stroke="#000" stroke-width="1.3"/><rect x="14.2" y="5.2" width="2.6" height="2.8" fill="#000"/></svg>
 <!-- edge -->
 <svg style="left:399px;top:736px" width="24" height="24" viewBox="0 0 24 24"><defs><linearGradient id="eb" x1="0" y1="0" x2="0.3" y2="1"><stop offset="0" stop-color="#2AA8EC"/><stop offset="1" stop-color="#0D5CB0"/></linearGradient><linearGradient id="eg2" x1="0" y1="0" x2="1" y2="0.6"><stop offset="0" stop-color="#22A9EA"/><stop offset="0.5" stop-color="#2CC4C4"/><stop offset="1" stop-color="#5ADF5A"/></linearGradient></defs><circle cx="12" cy="12" r="12" fill="url(#eb)"/><path d="M0.2 10C1.5 3.5 6.5 0 12 0C19 0 24 5 24 11C24 15 21.5 16.5 18 16.5C15.5 16.5 14.8 15.5 15 13.5C15.2 10.5 12.5 8.5 9 8.5C5.5 8.5 2 10 0.2 12Z" fill="url(#eg2)"/><path d="M9.5 10.5C8 13 8 17 10 19.5C12 21.5 15.5 21.8 19 20.5L22.5 19.3C20.5 22.5 17 24.2 12.5 24.2C9.5 24.2 7.5 21 7.3 17C7.2 14 8 11.5 9.5 10.5Z" fill="#0D4FA0"/><circle cx="12" cy="13.5" r="3" fill="#DFE6EE"/></svg>
 <!-- explorer -->
 <svg style="left:449px;top:739px" width="22" height="19"><path d="M0 1Q0 0 1 0H8.5L10 1.5V3H0Z" fill="#E3A21A"/><rect x="0" y="1.5" width="21" height="15.5" rx="0.8" fill="#FFD35C"/><rect x="0" y="1.5" width="21" height="3" fill="#FFDC78"/><path d="M4.5 18V11.5Q4.5 10 6 10H16Q17.5 10 17.5 11.5V18H14V13H8V18Z" fill="#3A8FE0"/></svg>
 <div class="a" style="left:440px;top:766px;width:32px;height:2px;background:#3D94EA"></div>
 <div class="a" style="left:472px;top:766px;width:8px;height:2px;background:#9DC1E8"></div>
 <!-- outlook -->
 <svg style="left:497px;top:737px" width="25" height="23"><path d="M6 7L14 1Q15.5 0 17 1L24 5.5V20Q24 22 22 22H8Q6 22 6 20Z" fill="#1592E0"/><path d="M6 9L24 5.5V12L13 17Z" fill="#0F62BE"/><path d="M6 12L24 12V20Q24 22 22 22H8Q6 22 6 20Z" fill="#3CC6F2"/><path d="M11 22L24 13V20Q24 22 22 22Z" fill="#4DD6F8"/><rect x="0" y="4" width="14" height="14" rx="1" fill="#0A6ACF"/><ellipse cx="7" cy="11" rx="3.6" ry="4.2" stroke="#fff" stroke-width="1.9" fill="none"/></svg>
 <!-- yandex -->
 <div class="a" style="left:546px;top:736px;width:24px;height:24px;border-radius:50%;background:#FC3F1D"></div>
 <svg style="left:552px;top:740px" width="12" height="17"><path d="M9 16V1H6.5C3.5 1 1.8 2.8 1.8 5.3C1.8 7.5 3 8.8 5 9.5L1.5 16" stroke="#fff" stroke-width="2.2" fill="none"/></svg>
 <!-- opera -->
 <svg style="left:595px;top:736px" width="24" height="24"><defs><linearGradient id="og" x1="0" y1="0" x2="0.3" y2="1"><stop offset="0" stop-color="#FF1B2D"/><stop offset="1" stop-color="#A70014"/></linearGradient></defs><ellipse cx="11.5" cy="12" rx="11" ry="11.5" fill="url(#og)"/><ellipse cx="12.3" cy="12" rx="5.3" ry="8.6" fill="#E2E8F0"/></svg>
 <div class="a" style="left:587px;top:766px;width:40px;height:2px;background:#3D94EA"></div>
 <!-- yandex browser -->
 <div class="a" style="left:644px;top:736px;width:24px;height:24px;border-radius:50%;background:#fff"></div>
 <svg style="left:648px;top:740px" width="16" height="17"><defs><linearGradient id="yb" x1="0" y1="0" x2="1" y2="0"><stop offset="0" stop-color="#FF4A1A"/><stop offset="1" stop-color="#F040E0"/></linearGradient></defs><path d="M2.5 2L8 9V16" stroke="#FF4A1A" stroke-width="2.4" fill="none"/><path d="M8 9L13.5 2" stroke="url(#yb)" stroke-width="2.4"/></svg>
 <!-- sublime -->
 <div class="a" style="left:693px;top:736px;width:24px;height:24px;border-radius:3px;background:#404040"></div>
 <svg style="left:699px;top:740px" width="13" height="17"><path d="M12 0.5V5.5L1 9V4Z" fill="#FF9A00"/><path d="M1 9L12 12.5V7.5L1 4Z" fill="#E88A00"/><path d="M12 7.5V12.5L1 16V11Z" fill="#FF9A00"/></svg>
 <!-- media player -->
 <svg style="left:742px;top:737px" width="25" height="24"><defs><linearGradient id="mpg" x1="0" y1="0" x2="1" y2="1"><stop offset="0" stop-color="#1AA0EA"/><stop offset="1" stop-color="#0A5DBE"/></linearGradient></defs><path d="M0.5 3.5L23.5 0.8V6.5L0.5 8Z" fill="#3EC6F5"/><path d="M0.5 3.5L6 2.9L4 7.7L0.5 8Z" fill="#0E6FD0"/><path d="M11 2.3L15 1.8L13.5 6.9L9.5 7.2Z" fill="#0E8FE0"/><rect x="0" y="6.5" width="24" height="17" rx="1.5" fill="url(#mpg)"/><path d="M0 7.5L6 6.8L1 12Z" fill="#0E5FC0"/><path d="M9.5 10.5L17.5 15L9.5 19.5Z" fill="#fff"/></svg>
 <div class="a" style="left:734px;top:766px;width:40px;height:2px;background:#3D94EA"></div>
 <!-- settings -->
 <svg style="left:794px;top:739px" width="18" height="18"><path d="M15.52 6.45L15.73 7.07L17.85 7.39L17.85 10.61L15.73 10.93L15.52 11.55L15.41 11.81L15.12 12.39L16.40 14.12L14.12 16.40L12.39 15.12L11.81 15.41L11.55 15.52L10.93 15.73L10.61 17.85L7.39 17.85L7.07 15.73L6.45 15.52L6.19 15.41L5.61 15.12L3.88 16.40L1.60 14.12L2.88 12.39L2.59 11.81L2.48 11.55L2.27 10.93L0.15 10.61L0.15 7.39L2.27 7.07L2.48 6.45L2.59 6.19L2.88 5.61L1.60 3.88L3.88 1.60L5.61 2.88L6.19 2.59L6.45 2.48L7.07 2.27L7.39 0.15L10.61 0.15L10.93 2.27L11.55 2.48L11.81 2.59L12.39 2.88L14.12 1.60L16.40 3.88L15.12 5.61L15.41 6.19Z" fill="#363636"/><circle cx="9" cy="9" r="4.6" fill="#DFE5F0"/></svg>
 <div class="a" style="left:783px;top:766px;width:40px;height:2px;background:#3D94EA"></div>
 <!-- word -->
 <div class="a" style="left:828px;top:728px;width:48px;height:40px;background:#F0F3F8"></div>
 <svg style="left:840px;top:736px" width="24" height="24"><rect x="13.5" y="3.5" width="9" height="17.5" fill="#fff" stroke="#2B579A"/><path d="M13 6.5H20M13 8.5H20M13 10.5H20M13 12.5H20M13 14.5H20M13 16.5H20" stroke="#2B579A"/><path d="M0.8 3L14 1V22.8L0.8 20.5Z" fill="#2B579A"/><path d="M2.8 8L4.5 15.5L7 10.5L9.5 15.5L11.2 8" stroke="#fff" stroke-width="1.6" fill="none"/></svg>
 <div class="a" style="left:828px;top:766px;width:48px;height:2px;background:#3D94EA"></div>
 <!-- tray -->
 <div class="a" style="left:1065px;top:739px;width:20px;height:20px;border-radius:50%;background:#fff"></div>
 <div class="a" style="left:1066px;top:740px;width:18px;height:18px;border-radius:50%;background:#1A8AD8;color:#fff;font-weight:bold;font-size:14px;line-height:18px;text-align:center">?</div>
 <div class="a" style="left:1078px;top:747px;width:11px;height:11px;border-radius:50%;background:#F0A41E;border:1px solid #fff"></div>
 <div class="a" style="left:1082px;top:749px;width:2px;height:6px;background:#fff"></div>
 <svg style="left:1096px;top:743px" width="14" height="9"><path d="M1 8L7 1.5L13 8" stroke="#111" stroke-width="1.3" fill="none"/></svg>
 <svg style="left:1121px;top:739px" width="13" height="18"><path d="M1.5 2.5Q5.5 0 10 2.5M1.5 15.5Q5.5 18 10 15.5" stroke="#111" stroke-width="1.1" fill="none"/><rect x="1" y="5" width="8" height="8" rx="2" fill="none" stroke="#111" stroke-width="1.2"/><path d="M9 7.5L12.3 5.8V12.2L9 10.5" fill="none" stroke="#111" stroke-width="1.1"/></svg>
 <svg style="left:1142px;top:741px" width="18" height="14"><path d="M1.5 0V3M4.5 0V3M0.5 3H5.5V6Q5.5 8 3 8Q0.5 8 0.5 6Z" stroke="#111" stroke-width="1" fill="none"/><path d="M3 8V13" stroke="#111" stroke-width="1.1"/><rect x="5.5" y="3.5" width="11" height="8" fill="none" stroke="#111" stroke-width="1.1"/><rect x="7" y="5" width="8.5" height="5" fill="#111"/><rect x="16.5" y="5.5" width="1.5" height="4" fill="#111"/></svg>
 <svg style="left:1170px;top:742px" width="13" height="14"><path d="M0.7 13.5A12.5 12.5 0 0 1 12.5 1" stroke="#666" stroke-width="1" fill="none"/><path d="M3.5 13.5A9.5 9.5 0 0 1 12.5 4" stroke="#111" stroke-width="1.1" fill="none"/><path d="M6.5 13.5A6.5 6.5 0 0 1 12.5 7" stroke="#111" stroke-width="1.1" fill="none"/><circle cx="10.5" cy="12" r="1.5" fill="#111"/></svg>
 <svg style="left:1190px;top:741px" width="18" height="15"><path d="M1 5H4L8 1.5V13.5L4 10H1Z" fill="none" stroke="#111" stroke-width="1.2"/><path d="M10.5 5Q12 7.5 10.5 10M12.8 3Q15.5 7.5 12.8 12" stroke="#111" stroke-width="1.1" fill="none"/><path d="M15 1Q18.5 7.5 15 14" stroke="#888" stroke-width="1" fill="none"/></svg>
 <div class="a" style="left:1217px;top:741px;font-size:10.8px;line-height:14px;color:#111">ENG</div>
 <div class="a" style="left:1266px;top:731px;font-size:11px;line-height:14px;color:#111">15:25</div>
 <div class="a" style="left:1253px;top:749px;font-size:10.9px;line-height:14px;color:#111">29.07.2025</div>
 <svg style="left:1325px;top:740px" width="20" height="22"><path d="M0.5 0.5H15.5V12.5H5L2 15.5V12.5H0.5Z" fill="#000"/><path d="M3 4H13M3 6.5H13M3 9H10" stroke="#fff" stroke-width="1"/></svg>
 <div class="a" style="left:1332px;top:747px;width:17px;height:17px;border-radius:50%;background:#CFCFCF;border:1px solid #999;color:#111;font-size:12px;line-height:15px;text-align:center">2</div>
 <div class="a" style="left:1361px;top:728px;width:1px;height:40px;background:#A9B0B8"></div>
</div>

</body></html>
